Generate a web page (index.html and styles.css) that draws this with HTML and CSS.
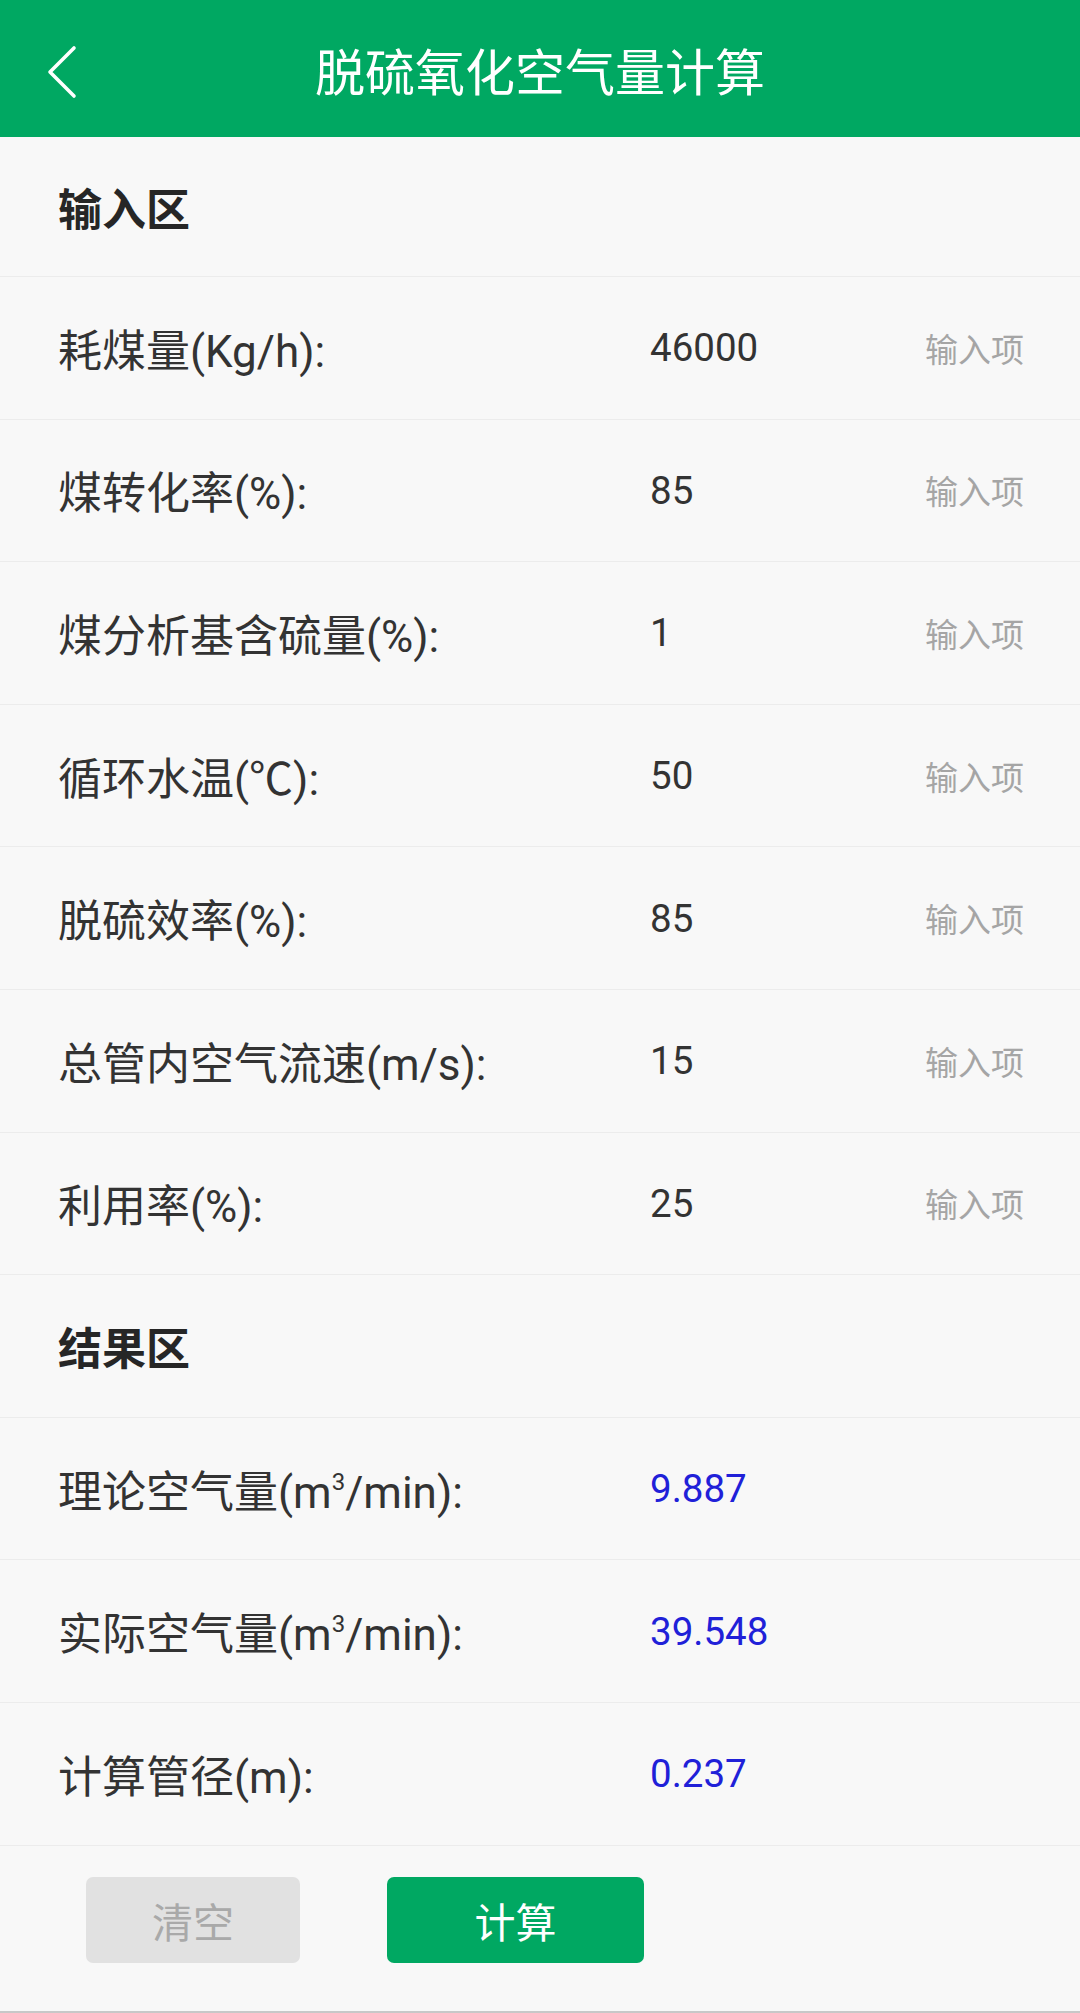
FILE: index.html
```html
<!DOCTYPE html>
<html lang="zh-CN">
<head>
<meta charset="utf-8">
<title>脱硫氧化空气量计算</title>
<link rel="stylesheet" href="styles.css">
</head>
<body>
<div class="screen">
  <header class="topbar">
    <svg class="back" width="40" height="60" viewBox="0 0 40 60" aria-hidden="true">
      <polyline points="32,6 8,30 32,54" fill="none" stroke="#ffffff" stroke-width="3.6" stroke-linecap="round" stroke-linejoin="round"/>
    </svg>
    <h1 class="title">脱硫氧化空气量计算</h1>
  </header>

  <div class="section-head first">输入区</div>
  <div class="row"><span class="label">耗煤量(Kg/h):</span><span class="value">46000</span><span class="hint">输入项</span></div>
  <div class="row"><span class="label">煤转化率(%):</span><span class="value">85</span><span class="hint">输入项</span></div>
  <div class="row"><span class="label">煤分析基含硫量(%):</span><span class="value">1</span><span class="hint">输入项</span></div>
  <div class="row"><span class="label">循环水温(℃):</span><span class="value">50</span><span class="hint">输入项</span></div>
  <div class="row"><span class="label">脱硫效率(%):</span><span class="value">85</span><span class="hint">输入项</span></div>
  <div class="row"><span class="label">总管内空气流速(m/s):</span><span class="value">15</span><span class="hint">输入项</span></div>
  <div class="row"><span class="label">利用率(%):</span><span class="value">25</span><span class="hint">输入项</span></div>

  <div class="section-head">结果区</div>
  <div class="row"><span class="label">理论空气量(m<sup class="sup">3</sup>/min):</span><span class="value result">9.887</span></div>
  <div class="row"><span class="label">实际空气量(m<sup class="sup">3</sup>/min):</span><span class="value result">39.548</span></div>
  <div class="row"><span class="label">计算管径(m):</span><span class="value result">0.237</span></div>

  <div class="actions">
    <button class="btn btn-clear" type="button">清空</button>
    <button class="btn btn-calc" type="button">计算</button>
  </div>
</div>
</body>
</html>
```

FILE: styles.css
```css
html, body {
  margin: 0;
  padding: 0;
  background: #f8f8f8;
}

.screen {
  width: 1080px;
  height: 2013px;
  overflow: hidden;
  background: #f8f8f8;
  font-family: Roboto, "Noto Sans CJK SC", sans-serif;
  color: #333333;
  border-bottom: 2px solid #c8c8c8;
  box-sizing: border-box;
}

.topbar {
  height: 137px;
  background: #00a862;
  position: relative;
  display: flex;
  align-items: center;
  justify-content: center;
}

.back {
  position: absolute;
  left: 42px;
  top: 42px;
}

.title {
  margin: 0;
  font-family: "Noto Sans CJK SC", sans-serif;
  font-weight: 400;
  font-size: 50px;
  color: #ffffff;
  line-height: 1;
  letter-spacing: 0;
}

.section-head {
  height: 142.6px;
  box-sizing: border-box;
  border-bottom: 1.5px solid #ececec;
  display: flex;
  align-items: center;
  padding-left: 58px;
  font-family: "Noto Sans CJK SC", sans-serif;
  font-weight: 700;
  font-size: 44px;
  color: #262626;
}

.section-head.first {
  height: 140px;
}

.row {
  height: 142.6px;
  box-sizing: border-box;
  border-bottom: 1.5px solid #ececec;
  display: flex;
  align-items: center;
  padding-left: 58px;
  padding-right: 56px;
}

.label {
  width: 592px;
  flex: none;
  font-size: 44px;
  color: #333333;
  white-space: nowrap;
}

.sup {
  font-size: 24px;
  vertical-align: 18px;
  line-height: 0;
}

.value {
  flex: 1;
  font-size: 38.5px;
  color: #333333;
}

.value.result {
  color: #2020d8;
}

.hint {
  flex: none;
  font-family: "Noto Sans CJK SC", sans-serif;
  font-size: 33px;
  color: #a5a5a5;
}

.actions {
  display: flex;
  gap: 87px;
  padding-left: 86px;
  padding-top: 31px;
}

.btn {
  height: 86px;
  border: none;
  border-radius: 7px;
  font-family: "Noto Sans CJK SC", sans-serif;
  font-size: 41px;
  padding: 0;
  display: flex;
  align-items: center;
  justify-content: center;
}

.btn-clear {
  width: 214px;
  background: #e1e1e1;
  color: #a9a9a9;
}

.btn-calc {
  width: 257px;
  background: #00a862;
  color: #ffffff;
}
```
